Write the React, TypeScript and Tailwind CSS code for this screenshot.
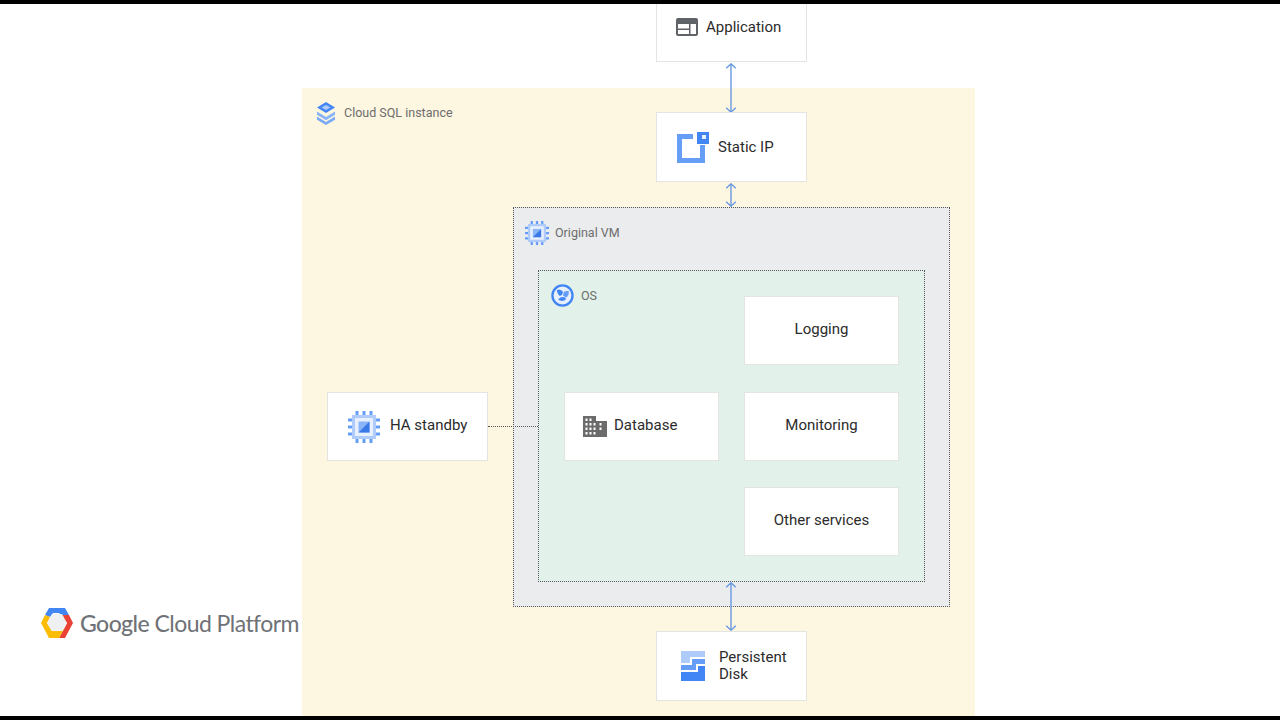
const font = "font-['Roboto',sans-serif]";

function Chip({ className = '' }: { className?: string }) {
  return (
    <svg viewBox="0 0 32 32" className={className}>
      <rect x="4" y="4" width="24" height="24" fill="#aecbfa" />
      <rect x="7" y="7" width="18" height="18" fill="#e8f0fe" />
      <rect x="10.500" y="10.500" width="11" height="11" fill="#8ab4f8" />
      <path d="M21.500 10.500v11h-11z" fill="#3b78e7" />
      <path d="M9 0v4M16 0v4M23 0v4M9 28v4M16 28v4M23 28v4M0 9h4M0 16h4M0 23h4M28 9h4M28 16h4M28 23h4" stroke="#669df6" strokeWidth="3" />
    </svg>
  );
}

function Arrow({ height, className = '' }: { height: number; className?: string }) {
  return (
    <svg width="12" height={height} viewBox={`0 0 12 ${height}`} className={className} fill="none" stroke="#6a9ae0" strokeWidth="1.400">
      <path d={`M6 .5V${height - 0.5}M1.200 5.200 6 .8l4.800 4.400M1.200 ${height - 5.200} 6 ${height - 0.8}l4.800-4.400`} />
    </svg>
  );
}

function Node({ className, children }: { className: string; children: React.ReactNode }) {
  return (
    <div className={`absolute flex items-center bg-white border border-[#e4e4e0] text-[15px] leading-[18px] text-[#2b2b2b] ${className}`}>
      {children}
    </div>
  );
}

export default function App() {
  return (
    <div className={`relative h-[720px] w-[1280px] overflow-hidden bg-white ${font}`}>
      <div className="absolute left-[302px] top-[88px] h-[628px] w-[673px] bg-[#fdf6e1]" />

      <div className="absolute left-[317px] top-[102px] flex items-center gap-[9px] text-[12.500px] text-[#6d6d6d]">
        <svg viewBox="0 0 18 23" className="h-[23px] w-[18px]">
          <path d="M9 0 18 5.500 9 11 0 5.500z" fill="#4285f4" />
          <path d="M9 3 13.500 5.500 9 8 4.500 5.500z" fill="#aecbfa" />
          <path d="M0 9.500 9 15l9-5.500v3.200L9 18.200 0 12.700z" fill="#8ab4f8" />
          <path d="M0 14.500 9 20l9-5.500v3.200L9 23 0 17.700z" fill="#7baaf7" />
        </svg>
        <span>Cloud SQL instance</span>
      </div>

      <Node className="left-[656px] top-[-8px] h-[70px] w-[151px] gap-[8px] pl-[19px]">
        <svg viewBox="0 0 22 18" className="h-[18px] w-[22px]">
          <path fillRule="evenodd" d="M2 0h18a2 2 0 0 1 2 2v14a2 2 0 0 1-2 2H2a2 2 0 0 1-2-2V2a2 2 0 0 1 2-2zm0 6v10h11v-4H2v-1.500h11V6zm12.500 0v10H20V6z" fill="#5f6368" />
        </svg>
        <span>Application</span>
      </Node>
      <Arrow height={50} className="absolute left-[725px] top-[63px]" />

      <Node className="left-[656px] top-[112px] h-[70px] w-[151px] gap-[9px] pl-[20px]">
        <svg viewBox="0 0 32 32" className="h-8 w-8">
          <path d="M0 3h16v5H5v19h18V14h5v18H0z" fill="#669df6" />
          <rect x="20" y="1" width="12" height="12" fill="#4285f4" />
          <rect x="25" y="4" width="4" height="4" fill="#e8f0fe" />
        </svg>
        <span>Static IP</span>
      </Node>
      <Arrow height={24} className="absolute left-[725px] top-[183px]" />

      <div className="absolute left-[513px] top-[207px] h-[400px] w-[437px] border border-dotted border-[#555] bg-[#eaecee]" />
      <div className="absolute left-[525px] top-[221px] flex items-center gap-[6px] text-[12.500px] text-[#6d6d6d]">
        <Chip className="h-6 w-6" />
        <span>Original VM</span>
      </div>

      <div className="absolute left-[538px] top-[270px] h-[312px] w-[387px] border border-dotted border-[#555] bg-[#e2f1e9]" />
      <div className="absolute left-[551px] top-[284px] flex items-center gap-[7px] text-[12.500px] text-[#6d6d6d]">
        <svg viewBox="0 0 24 24" className="h-[23px] w-[23px]">
          <circle cx="12" cy="12" r="10.500" fill="#e8f0fe" stroke="#4285f4" strokeWidth="2.400" />
          <path d="M6 6.500c2-1 4.500-.5 6.500 1.500l-1 3.500-2.500 1C7.500 11 6.500 9 6 6.500z" fill="#4285f4" />
          <path d="M18.500 7.500c.5 2.500-.5 5-2.500 6.500l-3-1.500-.5-1 1-3.500c1.500-.5 3.500-1 5-.5z" fill="#669df6" />
          <path d="M7.500 16.500c2.500 1.500 5.500 1.500 8 0L15 14l-2.500-.5-3 .5z" fill="#4285f4" />
        </svg>
        <span className="pt-[1px]">OS</span>
      </div>

      <Node className="left-[744px] top-[296px] h-[69px] w-[155px] justify-center pb-[3px]">Logging</Node>
      <Node className="left-[744px] top-[392px] h-[69px] w-[155px] justify-center pb-[3px]">Monitoring</Node>
      <Node className="left-[744px] top-[487px] h-[69px] w-[155px] justify-center pb-[3px]">Other services</Node>

      <Node className="left-[564px] top-[392px] h-[69px] w-[155px] gap-[7px] pb-[1px] pl-[18px]">
        <svg viewBox="0 0 24 21" className="h-[21px] w-6">
          <path fillRule="evenodd" d="M0 0h13v5h11v16H0zm2.500 2.500v2.500h2V2.500zm4 0v2.500h2V2.500zM2.500 7v2.500h2V7zm4 0v2.500h2V7zm4 0v2.500h2V7zm6 0v2.500h2V7zM2.500 11.500V14h2v-2.500zm4 0V14h2v-2.500zm4 0V14h2v-2.500zm6 0V14h2v-2.500zM2.500 16v2.500h2V16zm4 0v2.500h2V16zm4 0v2.500h2V16z" fill="#6b6b6b" />
        </svg>
        <span className="pb-[2px]">Database</span>
      </Node>

      <Node className="left-[327px] top-[392px] h-[69px] w-[161px] gap-[10px] pl-[20px]">
        <Chip className="h-8 w-8" />
        <span className="pb-[3px]">HA standby</span>
      </Node>
      <div className="absolute left-[488px] top-[426px] w-[50px] border-t border-dotted border-[#555]" />

      <Arrow height={49} className="absolute left-[725px] top-[582px]" />
      <Node className="left-[656px] top-[631px] h-[70px] w-[151px] gap-[14px] pl-[24px]">
        <svg viewBox="0 0 24 30" className="h-[30px] w-6">
          <path d="M0 0h24v6H9v6H0z" fill="#aecbfa" />
          <path d="M11 8h13v5H15v6H0v-5h11z" fill="#669df6" />
          <path d="M17 15h7v15H0v-9h17z" fill="#4285f4" />
        </svg>
        <span className="leading-[17px]">Persistent<br />Disk</span>
      </Node>

      <div className="absolute left-[41px] top-[608px] flex items-center gap-[7px]">
        <svg viewBox="0 0 32 30" className="h-[30px] w-8">
          <path d="M8 0h16l4 7H20l-2-2h-6L9 9 4 7z" fill="#4285f4" />
          <path d="M28 7l4 8-8 15h-6l5-9 3-6-5-6-1-2z" fill="#ea4335" />
          <path d="M4 7l5 2-3 6 4 6h13l-5 9H8L0 15z" fill="#fbbc04" />
          <path d="M11 6h10l5 9-4.500 8h-11L6 15z" fill="#eef0f2" />
        </svg>
        <span className="whitespace-nowrap font-['Lato',sans-serif] text-[23px] leading-[30px] tracking-[-0.550px] text-[#6f7276]">
          <span className="font-medium">Google</span> Cloud Platform
        </span>
      </div>

      <div className="absolute left-0 top-0 h-1 w-full bg-black" />
      <div className="absolute bottom-0 left-0 h-1 w-full bg-black" />
    </div>
  );
}
